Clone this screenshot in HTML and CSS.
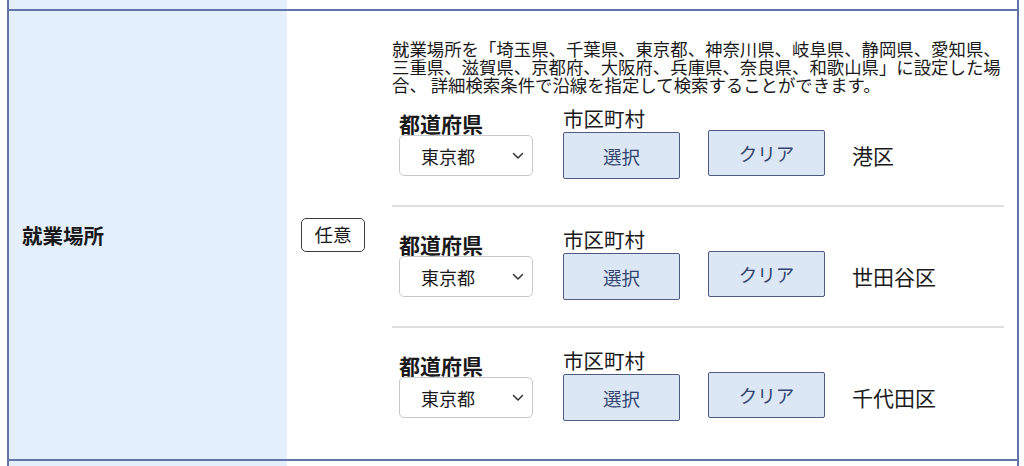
FILE: index.html
```html
<!DOCTYPE html>
<html lang="ja">
<head>
<meta charset="utf-8">
<title>就業場所</title>
<link rel="stylesheet" href="styles.css">
</head>
<body>
<div class="form-table">
  <div class="form-row form-row--prev">
    <div class="form-head"></div>
    <div class="form-body"></div>
  </div>
  <div class="form-row">
    <div class="form-head"><span class="head-label">就業場所</span></div>
    <div class="form-body">
      <span class="badge">任意</span>
      <div class="area">
        <p class="note">就業場所を「埼玉県、千葉県、東京都、神奈川県、岐阜県、静岡県、愛知県、三重県、滋賀県、京都府、大阪府、兵庫県、奈良県、和歌山県」に設定した場合、 詳細検索条件で沿線を指定して検索することができます。</p>
        <div class="loc-row">
          <div class="col col-pref">
            <span class="lbl-pref">都道府県</span>
            <div class="select-wrap">
              <select class="select"><option>東京都</option></select>
              <svg class="chev" width="12" height="8" viewBox="0 0 12 8"><path d="M1.5 1.5 L6 6 L10.5 1.5" fill="none" stroke="#333" stroke-width="1.5" stroke-linecap="round" stroke-linejoin="round"/></svg>
            </div>
          </div>
          <div class="col col-city">
            <span class="lbl-city">市区町村</span>
            <button class="btn btn-select">選択</button>
          </div>
          <button class="btn btn-clear">クリア</button>
          <span class="city">港区</span>
        </div>
        <div class="loc-row">
          <div class="col col-pref">
            <span class="lbl-pref">都道府県</span>
            <div class="select-wrap">
              <select class="select"><option>東京都</option></select>
              <svg class="chev" width="12" height="8" viewBox="0 0 12 8"><path d="M1.5 1.5 L6 6 L10.5 1.5" fill="none" stroke="#333" stroke-width="1.5" stroke-linecap="round" stroke-linejoin="round"/></svg>
            </div>
          </div>
          <div class="col col-city">
            <span class="lbl-city">市区町村</span>
            <button class="btn btn-select">選択</button>
          </div>
          <button class="btn btn-clear">クリア</button>
          <span class="city">世田谷区</span>
        </div>
        <div class="loc-row">
          <div class="col col-pref">
            <span class="lbl-pref">都道府県</span>
            <div class="select-wrap">
              <select class="select"><option>東京都</option></select>
              <svg class="chev" width="12" height="8" viewBox="0 0 12 8"><path d="M1.5 1.5 L6 6 L10.5 1.5" fill="none" stroke="#333" stroke-width="1.5" stroke-linecap="round" stroke-linejoin="round"/></svg>
            </div>
          </div>
          <div class="col col-city">
            <span class="lbl-city">市区町村</span>
            <button class="btn btn-select">選択</button>
          </div>
          <button class="btn btn-clear">クリア</button>
          <span class="city">千代田区</span>
        </div>
      </div>
    </div>
  </div>
  <div class="form-row form-row--next">
    <div class="form-head"></div>
    <div class="form-body"></div>
  </div>
</div>
</body>
</html>
```

FILE: styles.css
```css
* { box-sizing: border-box; }

html, body {
  margin: 0;
  padding: 0;
  background: #fff;
  overflow: hidden;
}

body {
  font-family: "Noto Sans CJK JP", "Noto Sans", sans-serif;
  color: #1a1a1a;
  height: 466px;
}

.form-table {
  margin-left: 7px;
  width: 1012px;
  border-left: 2px solid #6175a9;
  border-right: 2px solid #6175a9;
}

.form-row {
  display: grid;
  grid-template-columns: 278px 1fr;
  border-bottom: 2px solid #6175a9;
}

.form-row--prev { height: 11px; }
.form-row--next { height: 20px; border-bottom: none; }

.form-head {
  background: #e3effc;
  display: flex;
  align-items: center;
  padding-left: 13px;
}

.head-label {
  font-weight: 700;
  font-size: 20.5px;
  line-height: 26px;
}

.form-body {
  display: flex;
  align-items: center;
  padding-left: 14px;
  padding-right: 13px;
}

.badge {
  width: 64px;
  height: 34px;
  border: 1.5px solid #3c3c3c;
  border-radius: 5px;
  font-size: 18.5px;
  line-height: 30px;
  text-align: center;
  flex: none;
  margin-right: 27px;
}

.area {
  flex: 1;
  padding: 29px 0 38px;
  align-self: stretch;
}

.note {
  margin: 0 0 13px;
  font-size: 17.4px;
  line-height: 18px;
}

.loc-row {
  display: flex;
  align-items: flex-start;
  padding: 0 0 26px 7px;
  border-bottom: 2px solid #dedede;
  margin-bottom: 21px;
  height: 100px;
}

.loc-row:last-child {
  border-bottom: none;
  margin-bottom: 0;
  padding-bottom: 0;
  height: 72px;
}

.col {
  display: flex;
  flex-direction: column;
  align-items: flex-start;
}

.lbl-pref {
  font-weight: 700;
  font-size: 21px;
  line-height: 22px;
  margin-top: 5px;
}

.lbl-city {
  font-size: 20.5px;
  line-height: 22px;
}

.select-wrap {
  position: relative;
  margin-top: 1px;
}

.select {
  appearance: none;
  -webkit-appearance: none;
  width: 134px;
  height: 41px;
  border: 1px solid #c9c9c9;
  border-radius: 5px;
  background: #fff;
  font-family: inherit;
  font-size: 18px;
  color: #1a1a1a;
  padding: 0 0 0 21px;
  margin: 0;
}

.chev {
  position: absolute;
  right: 9px;
  top: 17px;
  pointer-events: none;
}

.col-pref { margin-right: 30px; }
.col-city { margin-right: 28px; }

.btn {
  width: 117px;
  background: #dce7f6;
  border: 1.5px solid #4d5b82;
  border-radius: 2px;
  font-family: inherit;
  font-size: 18.5px;
  color: #33456f;
  padding: 0;
  margin: 0;
}

.btn-select {
  height: 47px;
  margin-top: 3px;
}

.btn-clear {
  height: 46px;
  margin-top: 23px;
  margin-right: 27px;
}

.city {
  font-size: 21px;
  line-height: 26px;
  margin-top: 35px;
}
```
